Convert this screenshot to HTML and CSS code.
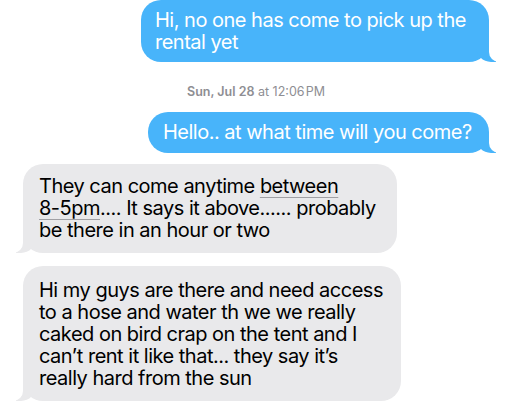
FILE: index.html
```html
<!DOCTYPE html>
<html lang="en">
<head>
    <meta charset="UTF-8">
    <meta name="viewport" content="width=device-width, initial-scale=1.0">
    <title>Messages</title>
    <link rel="stylesheet" href="styles.css">
</head>
<body>

    <div class="thread">
        <div class="bubble sent first">Hi, no one has come to pick up the rental yet</div>

        <p class="stamp"><b>Sun, Jul 28</b> at 12:06&#8202;PM</p>

        <div class="bubble sent second">Hello.. at what time will you come?</div>

        <div class="bubble received third">They can come anytime <span class="link">between <span class="nowrap">8-5pm</span></span>.... It says it above...... probably be there in an hour or two</div>

        <div class="bubble received fourth">Hi my guys are there and need access to a hose and water th we we really caked on bird crap on the tent and I can’t rent it like that... they say it’s really hard from the sun</div>
    </div>

</body>
</html>
```

FILE: styles.css
```css
body {
    margin: 0;
    background-color: #ffffff;
    font-family: 'Inter', 'Liberation Sans', sans-serif;
    overflow: hidden;
}

.thread {
    display: flex;
    flex-direction: column;
}

.bubble {
    position: relative;
    font-size: 20px;
    line-height: 22px;
    letter-spacing: -0.5px;
    border-radius: 20px;
    box-sizing: border-box;
}

/* blue ones, on the right */
.sent {
    align-self: flex-end;
    margin-right: 23px;
    background-color: #48b4fa;
    color: #ffffff;
}

.sent::before {
    content: "";
    position: absolute;
    bottom: 0;
    right: -7px;
    width: 20px;
    height: 20px;
    background-color: #48b4fa;
    border-bottom-left-radius: 15px;
}

.sent::after {
    content: "";
    position: absolute;
    bottom: 0;
    right: -10px;
    width: 10px;
    height: 20px;
    background-color: #ffffff;
    border-bottom-left-radius: 10px;
}

/* gray ones, on the left */
.received {
    align-self: flex-start;
    margin-left: 23px;
    background-color: #e9e9eb;
    color: #000000;
}

.received::before {
    content: "";
    position: absolute;
    bottom: 0;
    left: -7px;
    width: 20px;
    height: 20px;
    background-color: #e9e9eb;
    border-bottom-right-radius: 15px;
}

.received::after {
    content: "";
    position: absolute;
    bottom: 0;
    left: -10px;
    width: 10px;
    height: 20px;
    background-color: #ffffff;
    border-bottom-right-radius: 10px;
}

.first {
    width: 348px;
    padding: 9px 14px 9px 14px;
}

.second {
    width: 341px;
    padding: 9px 10px 10px 15px;
}

.third {
    width: 374px;
    margin-top: 11px;
    padding: 11px 14px 12px 16px;
}

.fourth {
    width: 378px;
    margin-top: 13px;
    padding: 13px 14px 12px 16px;
}

.stamp {
    margin: 22px 0 12px;
    text-align: center;
    font-size: 12.5px;
    line-height: 16px;
    color: #8e8e93;
}

.stamp b {
    font-weight: 600;
}

.link {
    text-decoration: underline;
    text-decoration-color: #a0a0a4;
    text-decoration-thickness: 1px;
    text-underline-offset: 4px;
}

.nowrap {
    white-space: nowrap;
}
```
